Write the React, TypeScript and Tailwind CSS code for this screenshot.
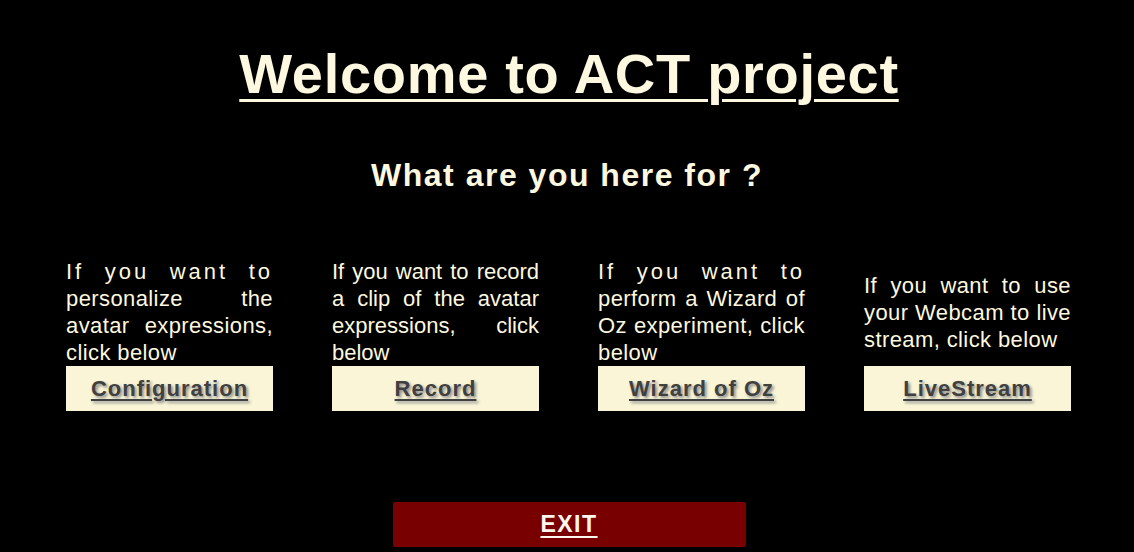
const options = [
  {
    lead: "If you want to ",
    text: "personalize the avatar expressions, click below",
    label: "Configuration",
    textClass: "text-[22px] leading-[27px] tracking-[0.4px] text-justify",
  },
  {
    lead: "",
    text: "If you want to record a clip of the avatar expressions, click below",
    label: "Record",
    textClass: "text-[22px] leading-[27px] text-justify",
  },
  {
    lead: "If you want to ",
    text: "perform a Wizard of Oz experiment, click below",
    label: "Wizard of Oz",
    textClass: "text-[22px] leading-[27px] tracking-[0.4px] text-justify",
  },
  {
    lead: "",
    text: "If you want to use your Webcam to live stream, click below",
    label: "LiveStream",
    textClass: "text-[22px] leading-[27px] tracking-[0.4px] text-justify",
  },
];

export default function App() {
  return (
    <div
      className="w-full h-[552px] bg-black flex flex-col items-center text-[#fdf8df] overflow-hidden"
      style={{ fontFamily: '"Liberation Sans", Arial, sans-serif' }}
    >
      <h1 className="mt-[42px] ml-[4px] text-[56px] leading-[64px] font-bold tracking-[0.7px] underline decoration-[3px] underline-offset-[6px]">
        Welcome to ACT project
      </h1>

      <h2 className="mt-[51px] text-[32px] leading-[36px] font-bold tracking-[1.5px]">
        What are you here for ?
      </h2>

      <div className="mt-[65px] pl-[3px] flex gap-[59px]">
        {options.map((opt) => (
          <div key={opt.label} className="w-[207px] flex flex-col">
            <div className="h-[108px] flex items-center">
              <p className={opt.textClass}>
                {opt.lead && <span className="tracking-[3px]">{opt.lead}</span>}
                {opt.text}
              </p>
            </div>
            <button
              className="h-[45px] w-full bg-[#f9f5d6] text-[#404040] text-[22px] font-bold tracking-[1px] underline underline-offset-[3px]"
              style={{ textShadow: "2px 2px 3px #8a8a8a" }}
            >
              {opt.label}
            </button>
          </div>
        ))}
      </div>

      <button className="mt-[91px] ml-[4px] w-[353px] h-[45px] bg-[#780000] rounded-[2px] text-[23px] font-bold tracking-[1.5px] text-[#fdf8ef] underline underline-offset-[4px]">
        EXIT
      </button>
    </div>
  );
}
